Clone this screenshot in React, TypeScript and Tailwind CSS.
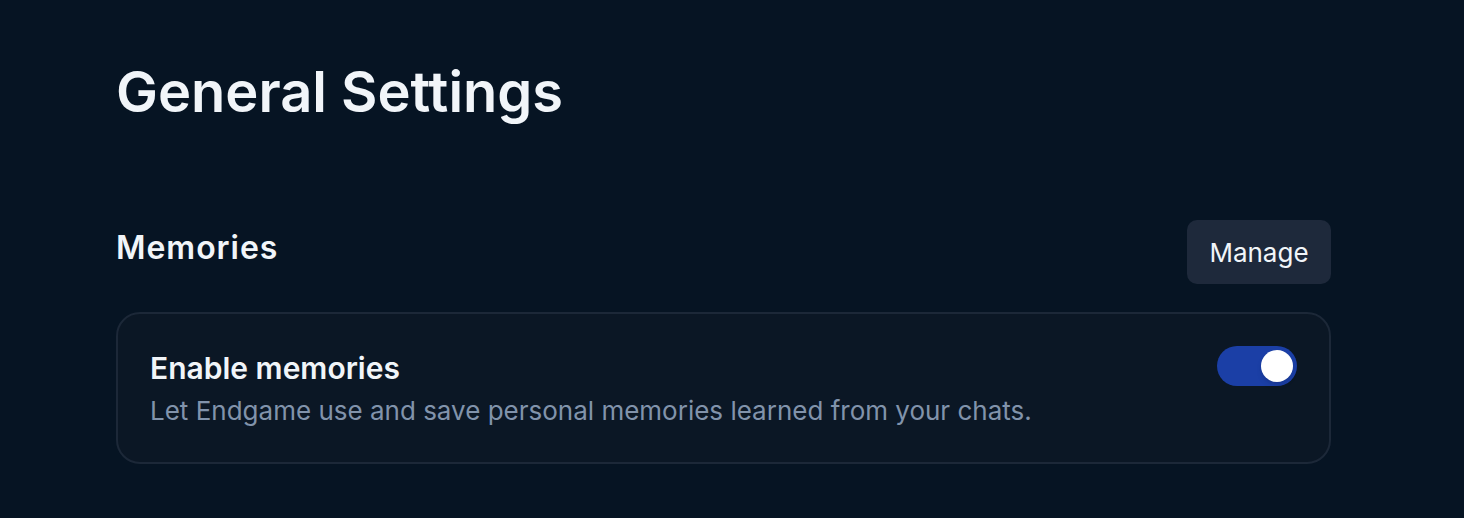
export default function App() {
  return (
    <div
      className="min-h-[518px] w-full bg-[#061423] text-[#f1f5f9]"
      style={{ fontFamily: 'Inter, "Noto Sans", sans-serif' }}
    >
      <div className="w-[1215px] ml-[116px] pt-[57px]">
        <h1 className="text-[56px] font-semibold leading-[70px]">General Settings</h1>

        <div className="mt-[93px] flex items-start justify-between">
          <h2 className="mt-[8px] text-[32px] font-semibold leading-[40px] tracking-[0.03em]">Memories</h2>
          <button className="h-[64px] w-[144px] rounded-[10px] bg-[#1e293b] text-[26px] text-[#f1f5f9]">
            Manage
          </button>
        </div>

        <div className="mt-[28px] flex items-start justify-between rounded-[24px] border-2 border-[#1c2838] bg-[#0b1725] px-[32px] pt-[34px] pb-[34px]">
          <div className="flex flex-col gap-[6px]">
            <div className="text-[30px] font-semibold leading-[40px]">Enable memories</div>
            <div className="text-[26px] leading-[34px] text-[#8193ab]">
              Let Endgame use and save personal memories learned from your chats.
            </div>
          </div>
          <div className="-mt-[2px] flex h-[40px] w-[80px] items-center justify-end rounded-full bg-[#1b3fa6] pr-[4px]">
            <div className="h-[32px] w-[32px] rounded-full bg-white shadow-md" />
          </div>
        </div>
      </div>
    </div>
  );
}
